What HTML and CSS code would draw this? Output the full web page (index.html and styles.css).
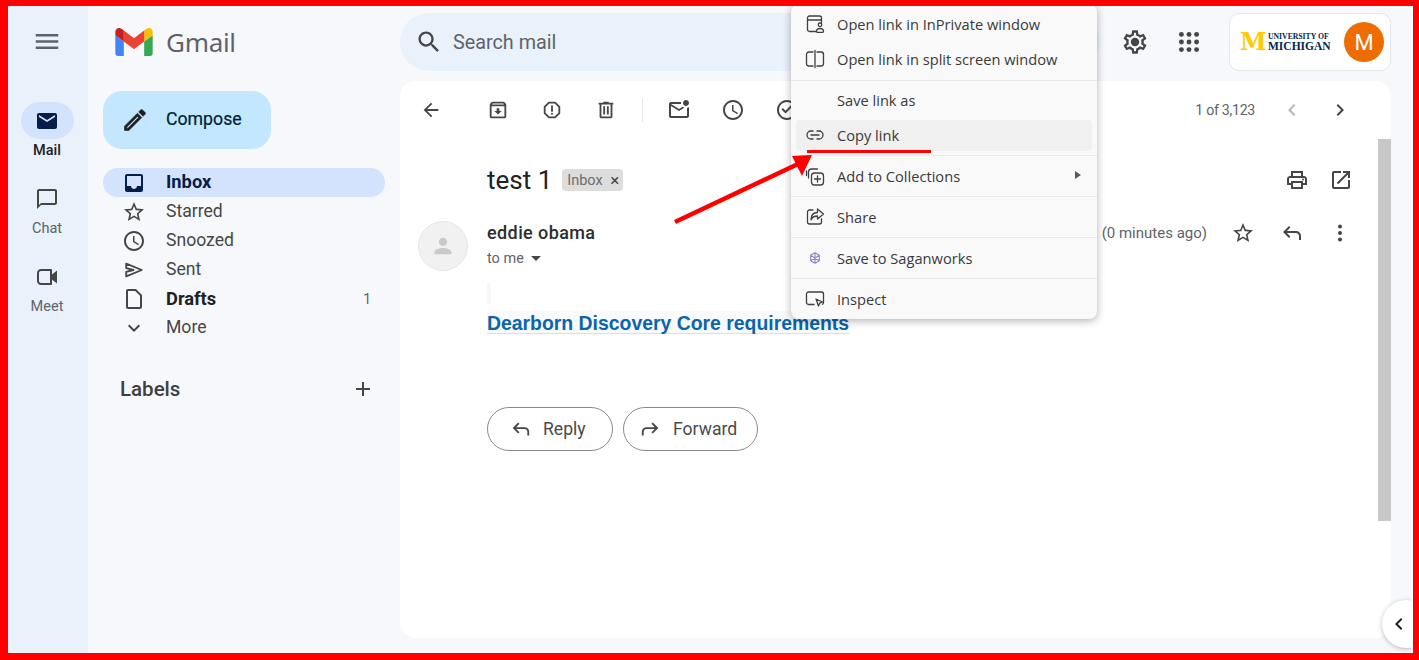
FILE: index.html
```html
<!DOCTYPE html>
<html lang="en">
<head>
<meta charset="utf-8">
<title>Gmail</title>
<link rel="stylesheet" href="styles.css">
</head>
<body>
<div class="frame">
  <aside class="rail">
    <svg class="ic rail-menu" viewBox="0 0 24 24"><path d="M3 18h18v-2H3v2zm0-5h18v-2H3v2zm0-7v2h18V6H3z"/></svg>
    <div class="rail-item active">
      <div class="rail-pill"><svg class="ic ic-24 navy" viewBox="0 0 24 24"><path d="M20 4H4c-1.1 0-2 .9-2 2v12c0 1.1.9 2 2 2h16c1.1 0 2-.9 2-2V6c0-1.1-.9-2-2-2zm0 4l-8 5-8-5V6l8 5 8-5v2z"/></svg></div>
      <span class="rail-label">Mail</span>
    </div>
    <div class="rail-item">
      <div class="rail-pill"><svg class="ic ic-24" viewBox="0 0 24 24"><path d="M20 2H4c-1.1 0-2 .9-2 2v18l4-4h14c1.1 0 2-.9 2-2V4c0-1.1-.9-2-2-2zm0 14H6l-2 2V4h16v12z"/></svg></div>
      <span class="rail-label">Chat</span>
    </div>
    <div class="rail-item">
      <div class="rail-pill"><svg class="ic ic-24" viewBox="0 0 24 24"><path d="M15 6v12H6c-1.100 0-2-.9-2-2V8c0-1.100.9-2 2-2h9m1-2H6C3.800 4 2 5.800 2 8v8c0 2.200 1.800 4 4 4h10c.55 0 1-.45 1-1v-4.500l5 4v-13l-5 4V5c0-.55-.45-1-1-1z"/></svg></div>
      <span class="rail-label">Meet</span>
    </div>
  </aside>

  <nav class="sidebar">
    <div class="brand">
      <svg class="gmail-logo" viewBox="52 42 88 66"><path fill="#4285f4" d="M58 108h14V74L52 59v43c0 3.32 2.69 6 6 6"/><path fill="#34a853" d="M120 108h14c3.32 0 6-2.69 6-6V59l-20 15"/><path fill="#fbbc04" d="M120 48v26l20-15v-8c0-7.42-8.47-11.65-14.4-7.2"/><path fill="#ea4335" d="M72 74V48l24 18 24-18v26L96 92"/><path fill="#c5221f" d="M52 51v8l20 15V48l-5.6-4.2c-5.94-4.45-14.4-.22-14.4 7.2"/></svg>
      <span class="brand-name">Gmail</span>
    </div>
    <button class="compose">
      <svg class="ic ic-28 ink pencil" viewBox="0 0 24 24"><path d="M14.06 9.02l.92.92L5.92 19H5v-.92l9.06-9.06M17.66 3c-.25 0-.51.1-.7.29l-1.83 1.83 3.75 3.75 1.83-1.83c.39-.39.39-1.02 0-1.41l-2.34-2.34c-.2-.2-.45-.29-.71-.29zm-3.6 3.19L3 17.25V21h3.75L17.81 9.94l-3.75-3.75z"/></svg>
      <span class="compose-text">Compose</span>
    </button>
    <ul class="nav">
      <li class="nav-row current"><svg class="ic ic-24 navy" viewBox="0 0 24 24"><path d="M19 3H5c-1.1 0-2 .9-2 2v14c0 1.1.9 2 2 2h14c1.1 0 2-.9 2-2V5c0-1.1-.9-2-2-2zm0 12h-4c0 1.66-1.35 3-3 3s-3-1.34-3-3H5V5h14v10z"/></svg><span class="nav-text">Inbox</span></li>
      <li class="nav-row"><svg class="ic ic-24" viewBox="0 0 24 24"><path d="M22 9.24l-7.19-.62L12 2 9.19 8.63 2 9.24l5.46 4.73L5.82 21 12 17.27 18.18 21l-1.63-7.03L22 9.24zM12 15.4l-3.76 2.27 1-4.28-3.32-2.88 4.38-.38L12 6.1l1.71 4.04 4.38.38-3.32 2.88 1 4.28L12 15.4z"/></svg><span class="nav-text">Starred</span></li>
      <li class="nav-row"><svg class="ic ic-24" viewBox="0 0 24 24"><path d="M11.99 2C6.47 2 2 6.48 2 12s4.47 10 9.99 10C17.52 22 22 17.52 22 12S17.52 2 11.99 2zM12 20c-4.42 0-8-3.58-8-8s3.58-8 8-8 8 3.58 8 8-3.58 8-8 8zm.5-13H11v6l5.25 3.15.75-1.23-4.5-2.67z"/></svg><span class="nav-text">Snoozed</span></li>
      <li class="nav-row"><svg class="ic ic-24 sent-ic" viewBox="0 0 24 24"><path d="M3.500 5l17 7-17 7v-5l8-2-8-2z"/></svg><span class="nav-text">Sent</span></li>
      <li class="nav-row strong"><svg class="ic ic-24" viewBox="0 0 24 24"><path d="M14 2H6c-1.1 0-2 .9-2 2v16c0 1.1.9 2 2 2h12c1.1 0 2-.9 2-2V8l-6-6zm4 18H6V4h7.17L18 8.83V20z"/></svg><span class="nav-text">Drafts</span><span class="count">1</span></li>
      <li class="nav-row"><svg class="ic ic-24" viewBox="0 0 24 24"><path d="M16.59 8.59L12 13.17 7.41 8.59 6 10l6 6 6-6z"/></svg><span class="nav-text">More</span></li>
    </ul>
    <div class="labels">
      <span>Labels</span>
      <svg class="ic ic-24" viewBox="0 0 24 24"><path d="M19 13h-6v6h-2v-6H5v-2h6V5h2v6h6v2z"/></svg>
    </div>
  </nav>

  <main class="main">
    <header class="topbar">
      <div class="search">
        <svg class="ic ic-28 dark" viewBox="0 0 24 24"><path d="M15.5 14h-.79l-.28-.27C15.41 12.59 16 11.11 16 9.5 16 5.91 13.09 3 9.5 3S3 5.91 3 9.5 5.91 16 9.5 16c1.61 0 3.09-.59 4.23-1.57l.27.28v.79l5 4.99L20.49 19l-4.99-5zm-6 0C7.01 14 5 11.99 5 9.5S7.01 5 9.5 5 14 7.01 14 9.5 11.99 14 9.5 14z"/></svg>
        <span>Search mail</span>
      </div>
      <div class="top-actions">
        <svg class="ic ic-28 dark" viewBox="0 0 24 24"><path d="M19.43 12.98c.04-.32.07-.64.07-.98s-.03-.66-.07-.98l2.11-1.65c.19-.15.24-.42.12-.64l-2-3.46c-.12-.22-.39-.3-.61-.22l-2.49 1c-.52-.4-1.08-.73-1.69-.98l-.38-2.65C14.46 2.18 14.25 2 14 2h-4c-.25 0-.46.18-.49.42l-.38 2.65c-.61.25-1.17.59-1.69.98l-2.49-1c-.23-.09-.49 0-.61.22l-2 3.46c-.13.22-.07.49.12.64l2.11 1.65c-.04.32-.07.65-.07.98s.03.66.07.98l-2.11 1.65c-.19.15-.24.42-.12.64l2 3.46c.12.22.39.3.61.22l2.49-1c.52.4 1.08.73 1.69.98l.38 2.65c.03.24.24.42.49.42h4c.25 0 .46-.18.49-.42l.38-2.65c.61-.25 1.17-.59 1.69-.98l2.49 1c.23.09.49 0 .61-.22l2-3.46c.12-.22.07-.49-.12-.64l-2.11-1.65zM17.45 11.27c.04.31.05.52.05.73 0 .21-.02.43-.05.73l-.14 1.13.89.7 1.08.84-.7 1.21-1.27-.51-1.04-.42-.9.68c-.43.32-.84.56-1.25.73l-1.06.43-.16 1.13-.2 1.35h-1.4l-.19-1.35-.16-1.13-1.06-.43c-.43-.18-.83-.41-1.23-.71l-.91-.7-1.06.43-1.27.51-.7-1.21 1.08-.84.89-.7-.14-1.13C6.52 12.43 6.5 12.2 6.5 12s.02-.43.05-.72l.14-1.13-.89-.7-1.08-.84.7-1.21 1.27.51 1.04.42.9-.68c.43-.32.84-.56 1.25-.73l1.06-.43.16-1.13.2-1.35h1.39l.19 1.35.16 1.13 1.06.43c.43.18.83.41 1.23.71l.91.7 1.06-.43 1.27-.51.7 1.21-1.07.85-.89.7.14 1.13z"/><circle cx="12" cy="12" r="3.6"/></svg>
        <svg class="ic ic-28 dark" viewBox="0 0 24 24"><circle cx="5.5" cy="5.5" r="2.1"/><circle cx="12" cy="5.5" r="2.1"/><circle cx="18.5" cy="5.5" r="2.1"/><circle cx="5.5" cy="12" r="2.1"/><circle cx="12" cy="12" r="2.1"/><circle cx="18.5" cy="12" r="2.1"/><circle cx="5.5" cy="18.5" r="2.1"/><circle cx="12" cy="18.5" r="2.1"/><circle cx="18.5" cy="18.5" r="2.1"/></svg>
      </div>
      <div class="account">
        <span class="block-m">M</span>
        <span class="umich"><span class="um-top">UNIVERSITY OF</span><span class="um-bottom">MICHIGAN</span></span>
        <span class="avatar">M</span>
      </div>
    </header>

    <section class="card">
      <div class="toolbar">
        <span class="tool"><svg class="ic ic-22" viewBox="0 0 24 24"><path d="M20 11H7.83l5.59-5.59L12 4l-8 8 8 8 1.41-1.41L7.83 13H20v-2z"/></svg></span>
        <span class="tool tool-gap"><svg class="ic ic-22" viewBox="0 0 24 24"><path d="M20.54 5.23l-1.39-1.68C18.88 3.21 18.47 3 18 3H6c-.47 0-.88.21-1.16.55L3.46 5.23C3.17 5.57 3 6.02 3 6.5V19c0 1.1.9 2 2 2h14c1.1 0 2-.9 2-2V6.5c0-.48-.17-.93-.46-1.27zM6.24 5h11.52l.83 1H5.42l.82-1zM5 19V8h14v11H5zm8.45-9h-2.9v3H8l4 4 4-4h-2.55z"/></svg></span>
        <span class="tool"><svg class="ic ic-22" viewBox="0 0 24 24"><path d="M15.73 3H8.27L3 8.27v7.46L8.27 21h7.46L21 15.73V8.27L15.73 3zM19 14.9L14.9 19H9.1L5 14.9V9.1L9.1 5h5.8L19 9.1v5.8z"/><circle cx="12" cy="16" r="1.1"/><path d="M11 7h2v7h-2z"/></svg></span>
        <span class="tool"><svg class="ic ic-22" viewBox="0 0 24 24"><path d="M15 4V3H9v1H4v2h1v13c0 1.1.9 2 2 2h10c1.1 0 2-.9 2-2V6h1V4h-5zm2 15H7V6h10v13zM9 8h2v9H9zm4 0h2v9h-2z"/></svg></span>
        <span class="tool-sep"></span>
        <span class="tool"><svg class="ic ic-24" viewBox="0 0 24 24"><path d="M22 8.98V18c0 1.1-.9 2-2 2H4c-1.1 0-2-.9-2-2V6c0-1.1.9-2 2-2h10.1c-.06.32-.1.66-.1 1s.04.68.1 1H4l8 5 3.67-2.29c.47.43 1.02.76 1.63.98L12 13 4 8v10h16V9.9c.74-.15 1.42-.48 2-.92zM16 5c0 1.66 1.34 3 3 3s3-1.34 3-3-1.34-3-3-3-3 1.34-3 3z"/></svg></span>
        <span class="tool"><svg class="ic ic-24" viewBox="0 0 24 24"><path d="M11.99 2C6.47 2 2 6.48 2 12s4.47 10 9.99 10C17.52 22 22 17.52 22 12S17.52 2 11.99 2zM12 20c-4.42 0-8-3.58-8-8s3.58-8 8-8 8 3.58 8 8-3.58 8-8 8zm.5-13H11v6l5.25 3.15.75-1.23-4.5-2.67z"/></svg></span>
        <span class="tool"><svg class="ic ic-24" viewBox="0 0 24 24"><path d="M11.99 2C6.47 2 2 6.48 2 12s4.47 10 9.99 10C17.52 22 22 17.52 22 12S17.52 2 11.99 2zM12 20c-4.42 0-8-3.58-8-8s3.58-8 8-8 8 3.58 8 8-3.58 8-8 8zm-1.5-4.5-4-4 1.4-1.4 2.6 2.6 5.6-5.6 1.4 1.4z"/></svg></span>
        <span class="pager">1 of 3,123</span>
        <span class="page-btn faded"><svg class="ic ic-24" viewBox="0 0 24 24"><path d="M15.41 7.41L14 6l-6 6 6 6 1.41-1.41L10.83 12z"/></svg></span>
        <span class="page-btn"><svg class="ic ic-24 dark" viewBox="0 0 24 24"><path d="M10 6L8.59 7.41 13.17 12l-4.58 4.59L10 18l6-6z"/></svg></span>
      </div>
      <div class="reader">
        <div class="reader-body">
          <div class="subject">
            <h1>test 1</h1>
            <span class="chip">Inbox <span class="chip-x">×</span></span>
            <span class="subject-actions">
              <svg class="ic ic-24 dark" viewBox="0 0 24 24"><path d="M19 8h-1V3H6v5H5c-1.66 0-3 1.34-3 3v6h4v4h12v-4h4v-6c0-1.66-1.34-3-3-3zM8 5h8v3H8V5zm8 12v2H8v-4h8v2zm2-2v-2H6v2H4v-4c0-.55.45-1 1-1h14c.55 0 1 .45 1 1v4h-2z"/><circle cx="18" cy="11.5" r="1"/></svg>
              <svg class="ic ic-24 dark" viewBox="0 0 24 24"><path d="M19 19H5V5h7V3H5c-1.11 0-2 .9-2 2v14c0 1.1.89 2 2 2h14c1.1 0 2-.9 2-2v-7h-2v7zM14 3v2h3.59l-9.83 9.83 1.41 1.41L19 6.41V10h2V3h-7z"/></svg>
            </span>
          </div>
          <div class="message">
            <div class="sender-photo"><svg viewBox="0 0 24 24"><circle cx="12" cy="7.500" r="4.500"/><path d="M2.500 19.500c0-3.600 5.500-5.200 9.500-5.200s9.500 1.600 9.500 5.200c0 1-.8 1.600-1.700 1.600H4.200c-.9 0-1.700-.6-1.700-1.600z"/></svg></div>
            <div class="msg-main">
              <div class="msg-head">
                <div class="msg-who">
                  <div class="sender">eddie obama</div>
                  <div class="to">to me <span class="caret"></span></div>
                </div>
                <div class="msg-tools">
                  <span class="time">(0 minutes ago)</span>
                  <svg class="ic ic-24 dark" viewBox="0 0 24 24"><path d="M22 9.24l-7.19-.62L12 2 9.19 8.63 2 9.24l5.46 4.73L5.82 21 12 17.27 18.18 21l-1.63-7.03L22 9.24zM12 15.4l-3.76 2.27 1-4.28-3.32-2.88 4.38-.38L12 6.1l1.71 4.04 4.38.38-3.32 2.88 1 4.28L12 15.4z"/></svg>
                  <svg class="ic ic-24 dark reply-ic" viewBox="0 0 24 24"><path d="M20 19v-4c0-.83-.29-1.54-.88-2.12C18.540 12.290 17.830 12 17 12H7.830l3.600 3.600L10 17l-6-6 6-6 1.420 1.400L7.830 10H17c1.380 0 2.560.49 3.540 1.460C21.510 12.440 22 13.620 22 15v4h-2z"/></svg>
                  <svg class="ic ic-24 dark more-ic" viewBox="0 0 24 24"><circle cx="12" cy="5.500" r="2"/><circle cx="12" cy="12" r="2"/><circle cx="12" cy="18.500" r="2"/></svg>
                </div>
              </div>
              <div class="quote-mark"></div>
              <a class="doc-link">Dearborn Discovery Core requirements</a>
              <div class="reply-row">
                <span class="pill-btn pill-reply"><svg class="ic ic-22" viewBox="0 0 24 24"><path d="M20 19v-4c0-.83-.29-1.54-.88-2.12C18.540 12.290 17.830 12 17 12H7.830l3.600 3.600L10 17l-6-6 6-6 1.420 1.400L7.830 10H17c1.380 0 2.560.49 3.540 1.460C21.510 12.440 22 13.620 22 15v4h-2z"/></svg><span class="pill-text">Reply</span></span>
                <span class="pill-btn pill-forward"><svg class="ic ic-22" viewBox="0 0 24 24"><path transform="matrix(-1 0 0 1 24 0)" d="M20 19v-4c0-.83-.29-1.54-.88-2.12C18.540 12.290 17.830 12 17 12H7.830l3.600 3.600L10 17l-6-6 6-6 1.420 1.400L7.830 10H17c1.380 0 2.560.49 3.540 1.460C21.510 12.440 22 13.620 22 15v4h-2z"/></svg><span class="pill-text">Forward</span></span>
              </div>
            </div>
          </div>
        </div>
        <div class="scroll-track"><div class="scroll-thumb"></div></div>
      </div>
    </section>
    <div class="collapse"><svg class="ic ic-24 ink" viewBox="0 0 24 24"><path d="M15.410 7.410L14 6l-6 6 6 6 1.410-1.410L10.830 12z"/></svg></div>
  </main>

  <div class="context-menu">
    <div class="cm-row"><svg class="cm-ic" viewBox="0 0 20 20"><path d="M11.500 17.500H4.500a2 2 0 0 1-2-2V4a2 2 0 0 1 2-2h10a2 2 0 0 1 2 2v4.500M2.500 6h14"/><circle cx="15" cy="10.800" r="1.800"/><path d="M11.500 17.500c0-2 1.500-3 3.500-3s3.500 1 3.500 3c0 .5-.3.8-.8.8h-5.400c-.5 0-.8-.3-.8-.8z"/></svg><span>Open link in InPrivate window</span></div>
    <div class="cm-row"><svg class="cm-ic" viewBox="0 0 20 20"><path d="M8 3H4a2.500 2.500 0 0 0-2.500 2.500v9A2.500 2.500 0 0 0 4 17h4M10 1.500v17M12 3h4a2.500 2.500 0 0 1 2.500 2.500v9A2.500 2.500 0 0 1 16 17h-4"/></svg><span>Open link in split screen window</span></div>
    <div class="cm-sep cm-sep-first"></div>
    <div class="cm-row cm-plain"><span>Save link as</span></div>
    <div class="cm-row cm-hover"><svg class="cm-ic" viewBox="0 0 20 20"><path d="M8 6H6a4 4 0 0 0 0 8h2M12 6h2a4 4 0 0 1 0 8h-2M6 10h8"/></svg><span>Copy link</span></div>
    <div class="cm-sep"></div>
    <div class="cm-row cm-arrow"><svg class="cm-ic" viewBox="0 0 20 20"><path d="M3.500 12V6a3 3 0 0 1 3-3h6M1.500 9.500V5"/><rect x="6.500" y="7" width="12" height="12" rx="3"/><path d="M12.500 10v6M9.500 13h6"/></svg><span>Add to Collections</span><i class="cm-tri"></i></div>
    <div class="cm-sep"></div>
    <div class="cm-row"><svg class="cm-ic" viewBox="0 0 20 20"><path d="M8 3H4.500a2 2 0 0 0-2 2v10a2 2 0 0 0 2 2h10a2 2 0 0 0 2-2v-3M12.500 2l6 5-6 5V9c-3.500 0-5.500 1.500-6.500 4 0-5 2.500-7.500 6.500-7.500z"/></svg><span>Share</span></div>
    <div class="cm-sep"></div>
    <div class="cm-row"><svg class="cm-ic cm-sagan" viewBox="0 0 20 20"><path d="M10 3.500l5.500 3v7l-5.500 3-5.500-3v-7zM10 3.500v13M4.500 6.500l11 7M15.500 6.500l-11 7"/></svg><span>Save to Saganworks</span></div>
    <div class="cm-sep"></div>
    <div class="cm-row"><svg class="cm-ic" viewBox="0 0 20 20"><path d="M9 15.500H3.500a2 2 0 0 1-2-2V5a2 2 0 0 1 2-2h13a2 2 0 0 1 2 2v8.500a2 2 0 0 1-1 1.700"/><path d="M11 10l6.500 3-2.800 1.200-1.200 2.800z"/></svg><span>Inspect</span></div>
  </div>

  <svg class="annotation" viewBox="0 0 1419 660">
    <path class="ann-line" d="M675 222L798 164"/>
    <path class="ann-head" d="M812 155L792 156L802 176z"/>
    <path class="ann-under" d="M807 151.500H931"/>
  </svg>
</div>
</body>
</html>
```

FILE: styles.css
```css
* { box-sizing: border-box; }
html, body { margin: 0; padding: 0; }
body { width: 1419px; height: 660px; overflow: hidden; font-family: Roboto, "Noto Sans", sans-serif; color: #202124; }

.frame {
  position: relative;
  display: flex;
  width: 1419px;
  height: 660px;
  border-style: solid;
  border-color: #ff0000;
  border-width: 6px 6px 7px 8px;
  background: #f6f8fc;
  overflow: hidden;
}

.ic { display: block; flex: none; fill: #444746; }
.ic-22 { width: 22px; height: 22px; }
.ic-24 { width: 24px; height: 24px; }
.ic-28 { width: 28px; height: 28px; }
.navy { fill: #041e49; }
.ink { fill: #1f1f1f; }
.dark { fill: #444746; }

/* left rail */
.rail {
  flex: none;
  width: 80px;
  display: flex;
  flex-direction: column;
  align-items: center;
  gap: 21px;
  padding: 18px 2px 0 0;
  background: #e9f1fb;
}
.rail-menu { width: 30px; height: 35px; margin-bottom: 22px; fill: #5f6368; }
.rail-item { display: flex; flex-direction: column; align-items: center; gap: 4px; }
.rail-pill { width: 53px; height: 37px; border-radius: 19px; display: flex; align-items: center; justify-content: center; }
.rail-item.active .rail-pill { background: #d3e3fd; }
.rail-label { font-size: 14.500px; line-height: 16px; color: #5f6368; }
.rail-item.active .rail-label { color: #202124; font-weight: 500; }

/* sidebar */
.sidebar { flex: none; width: 312px; padding: 7px 15px 0; }
.brand { height: 58px; display: flex; align-items: center; gap: 13px; padding-left: 12px; }
.gmail-logo { width: 38px; height: 28px; display: block; }
.brand-name { font-size: 26px; color: #5f6368; font-family: "Noto Sans", Roboto, sans-serif; letter-spacing: -0.3px; }
.compose {
  display: flex;
  align-items: center;
  gap: 17px;
  width: 168px;
  height: 58px;
  margin: 20px 0 19px;
  padding: 0 0 0 18px;
  border: 0;
  border-radius: 19px;
  background: #c2e7ff;
  color: #001d35;
  font: 400 17.700px Roboto, sans-serif;
}
.compose-text { padding-bottom: 3px; -webkit-text-stroke: 0.2px #001d35; }
.pencil { stroke: #1f1f1f; stroke-width: 0.5; }
.nav { list-style: none; margin: 0; padding: 0; }
.nav-row {
  display: flex;
  align-items: center;
  gap: 20px;
  height: 29px;
  padding: 0 14px 0 19px;
  border-radius: 15px;
  font-size: 17.600px;
  color: #444746;
}
.nav-text { padding-bottom: 2px; }
.sent-ic { padding: 1px; fill: none; stroke: #444746; stroke-width: 2; stroke-linejoin: round; }
.nav-row .count { margin-left: auto; font-size: 14px; font-weight: 400; color: #5f6368; }
.nav-row.strong { font-size: 18.300px; font-weight: 700; color: #202124; }
.nav-row.strong .nav-text { padding-bottom: 0; }
.nav-row.current { background: #d3e3fd; font-size: 18.300px; font-weight: 700; color: #041e49; }
.labels {
  display: flex;
  justify-content: space-between;
  align-items: center;
  height: 24px;
  margin-top: 35px;
  padding: 0 10px 0 17px;
  font-size: 20.500px;
  font-weight: 500;
  color: #3c4043;
}

/* main */
.main { position: relative; flex: 1; min-width: 0; display: flex; flex-direction: column; border-right: 2px solid #fdfdff; overflow: hidden; padding-right: 20px; }
.topbar { flex: none; display: flex; align-items: center; height: 58px; margin: 7px 0 10px; }
.search {
  flex: none;
  display: flex;
  align-items: center;
  gap: 10px;
  width: 700px;
  height: 58px;
  padding-left: 15px;
  border-radius: 29px;
  background: #e9f1fb;
  font-size: 19.800px;
  color: #5f6368;
}
.top-actions { flex: none; display: flex; gap: 26px; margin-left: 21px; }
.account {
  flex: none;
  display: flex;
  align-items: center;
  width: 162px;
  height: 58px;
  margin-left: 26px;
  padding: 0 6px 0 10px;
  background: #fff;
  border: 1px solid #e3e6ec;
  border-radius: 10px;
}
.block-m { font: 700 24px/1 "DejaVu Serif", serif; color: #ffcb05; width: 28px; letter-spacing: -1px; }
.umich { display: flex; flex-direction: column; width: 66px; font-family: "Liberation Serif", serif; font-weight: 700; color: #00274c; }
.um-top { font-size: 7.700px; line-height: 8px; white-space: nowrap; }
.um-bottom { font-size: 11.500px; line-height: 10px; white-space: nowrap; }
.avatar {
  margin-left: auto;
  width: 40px;
  height: 40px;
  border-radius: 50%;
  background: #ef6c00;
  color: #fff;
  font-size: 22px;
  display: flex;
  align-items: center;
  justify-content: center;
}

/* card */
.card { flex: none; height: 557px; background: #fff; border-radius: 16px; display: flex; flex-direction: column; overflow: hidden; }
.toolbar { flex: none; height: 58px; display: flex; align-items: center; padding: 0 27px 0 4px; }
.tool { width: 54px; display: flex; justify-content: center; }
.tool-gap { margin-left: 13px; }
.tool-sep { width: 1px; height: 24px; margin: 0 9px; background: #e8eaed; }
.pager { margin-left: auto; margin-right: 13px; font-size: 14.200px; letter-spacing: -0.3px; color: #5f6368; }
.page-btn { width: 48px; display: flex; justify-content: center; }
.faded .ic { fill: #b4b6b8; }
.reader { flex: 1; display: flex; min-height: 0; }
.reader-body { flex: 1; min-width: 0; }
.scroll-track { flex: none; width: 13px; }
.scroll-thumb { height: 382px; background: #c8c8c8; }

.subject { height: 82px; display: flex; align-items: center; padding: 0 25px 0 87px; }
.subject h1 { margin: 0; font-size: 26px; font-weight: 400; color: #202124; }
.chip {
  display: flex;
  align-items: center;
  justify-content: space-between;
  width: 61px;
  height: 22px;
  margin-left: 10px;
  padding: 0 4px 0 5px;
  background: #dddddd;
  border-radius: 4px;
  font-size: 14.500px;
  color: #6e6e6e;
}
.chip-x { font-size: 17px; line-height: 1; color: #444746; }
.subject-actions { margin-left: auto; display: flex; gap: 20px; }

.message { display: flex; gap: 19px; padding: 0 0 0 18px; }
.sender-photo { flex: none; width: 50px; height: 50px; border-radius: 50%; background: #f1f1f1; border: 1px solid #e6e6e6; display: flex; align-items: center; justify-content: center; }
.sender-photo svg { width: 22px; height: 22px; fill: #c9c9c9; }
.msg-main { flex: 1; min-width: 0; }
.msg-head { display: flex; justify-content: space-between; padding-right: 26px; height: 49px; }
.sender { height: 24px; line-height: 24px; font-size: 18px; font-weight: 500; letter-spacing: 0.4px; color: #2d2e30; }
.to { height: 25px; padding-top: 2px; font-size: 14.500px; color: #5f6368; display: flex; align-items: center; gap: 7px; }
.caret { width: 0; height: 0; border-left: 5px solid transparent; border-right: 5px solid transparent; border-top: 5px solid #444746; }
.msg-tools { display: flex; align-items: center; height: 24px; }
.msg-tools .time { margin-right: 24px; font-size: 15px; color: #5f6368; }
.reply-ic { margin-left: 24px; }
.more-ic { margin-left: 25px; }
.quote-mark { width: 4px; height: 21px; margin-top: 13px; background: #f8f8f8; }
.doc-link {
  display: block;
  width: 363px;
  height: 23px;
  margin-top: 7px;
  padding-top: 1px;
  font: 700 19.400px/22px "Liberation Sans", Arial, sans-serif;
  white-space: nowrap;
  color: #0b65ad;
  background: #f8fafc;
  border-bottom: 1px solid #cfe3f4;
}
.reply-row { display: flex; gap: 10px; margin-top: 73px; }
.pill-btn {
  display: flex;
  align-items: center;
  gap: 12px;
  height: 44px;
  padding-left: 21px;
  border: 1px solid #8a8a8a;
  border-radius: 22px;
  font-size: 17.600px;
  color: #4a4a4a;
}
.pill-text { padding-bottom: 1px; }
.pill-reply { width: 126px; }
.pill-forward { width: 135px; padding-left: 16px; gap: 11px; }

.collapse {
  position: absolute;
  left: 982px;
  top: 594px;
  width: 48px;
  height: 48px;
  padding: 12px 0 0 5px;
  border-radius: 50%;
  background: #fff;
  box-shadow: 0 1px 4px rgba(60, 64, 67, 0.35);
}

/* context menu overlay */
.context-menu {
  position: absolute;
  left: 783px;
  top: -2px;
  width: 306px;
  padding: 5px 0 4px;
  background: #f9f9f9;
  border-radius: 8px;
  box-shadow: 0 2px 8px rgba(0, 0, 0, 0.3);
  font-family: "Open Sans", "Noto Sans", sans-serif;
  font-size: 14.650px;
  color: #3a3a3a;
}
.cm-row {
  display: flex;
  align-items: center;
  gap: 12px;
  height: 31px;
  margin: 0 5px;
  padding: 0 0 2px 9px;
  border-radius: 4px;
}
.cm-row + .cm-row { margin-top: 4px; }
.cm-plain { padding-left: 41px; }
.cm-hover { background: #f0f0f0; }
.cm-sep { height: 1px; margin: 4px 0 5px; background: #e9e9e9; }
.cm-sep-first { margin: 5px 0 4px; }
.cm-ic { flex: none; width: 20px; height: 20px; fill: none; stroke: #3f3f3f; stroke-width: 1.300; stroke-linejoin: round; stroke-linecap: round; }
.cm-sagan { stroke: #8f84c9; width: 16px; height: 16px; margin: 0 2px; }
.cm-arrow { position: relative; }
.cm-tri {
  position: absolute;
  right: 11px;
  top: 10px;
  width: 0;
  height: 0;
  border-top: 4px solid transparent;
  border-bottom: 4px solid transparent;
  border-left: 6px solid #5a5a5a;
}

/* red annotation on top of the screenshot */
.annotation { position: absolute; left: -8px; top: -6px; width: 1419px; height: 660px; pointer-events: none; }
.ann-line { fill: none; stroke: #ff0000; stroke-width: 4.500; }
.ann-head { fill: #ff0000; }
.ann-under { fill: none; stroke: #ff0000; stroke-width: 3; }
```
